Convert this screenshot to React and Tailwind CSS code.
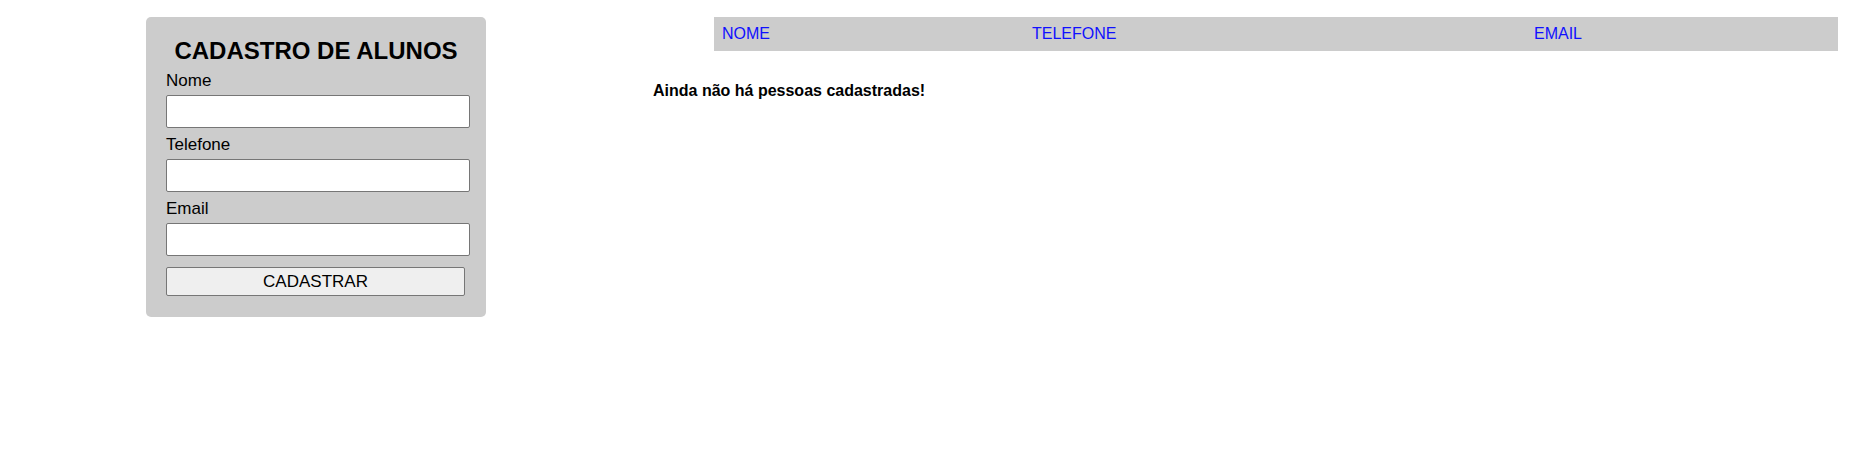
import { useState } from "react";

const Field = ({ label, value, onChange, first }) => (
  <div className={first ? "mt-[6px]" : "mt-[7px]"}>
    <label className="block text-[17px] leading-[20px] mb-[4px] text-black">
      {label}
    </label>
    <input
      type="text"
      value={value}
      onChange={e => onChange(e.target.value)}
      className="block w-[304px] h-[33px] bg-white border border-[#767676] rounded-[2px] px-1 outline-none"
    />
  </div>
);

const App = () => {
  const [nome, setNome] = useState("");
  const [telefone, setTelefone] = useState("");
  const [email, setEmail] = useState("");
  const [alunos, setAlunos] = useState([]);

  const cadastrar = () => {
    if (!nome) return;
    setAlunos([...alunos, { nome, telefone, email }]);
    setNome("");
    setTelefone("");
    setEmail("");
  };

  return (
    <div className="flex items-start pt-[17px] min-h-[475px] bg-white font-['Liberation_Sans',Arial,sans-serif]">

      {/* FORM */}
      <div className="ml-[146px] w-[340px] shrink-0 bg-[#cccccc] rounded-[5px] pt-[20px] pb-[21px] px-[20px]">
        <h2 className="text-center text-[24px] leading-[28px] font-bold text-black">
          CADASTRO DE ALUNOS
        </h2>

        <Field label="Nome" value={nome} onChange={setNome} first />
        <Field label="Telefone" value={telefone} onChange={setTelefone} />
        <Field label="Email" value={email} onChange={setEmail} />

        <button
          onClick={cadastrar}
          className="mt-[11px] block w-[299px] h-[29px] bg-[#efefef] border border-[#767676] rounded-[2px] text-[17px] leading-[20px] text-black"
        >
          CADASTRAR
        </button>
      </div>

      {/* LISTA */}
      <div className="ml-[167px] flex-1 mr-[24px]">
        <div className="ml-[61px] grid grid-cols-[310px_502px_1fr] h-[34px] bg-[#cccccc] text-[16px] leading-[34px] text-[#1010ff]">
          <span className="pl-[8px]">NOME</span>
          <span className="pl-[8px]">TELEFONE</span>
          <span className="pl-[8px]">EMAIL</span>
        </div>

        {alunos.length === 0 ? (
          <p className="mt-[30px] text-[16px] leading-[20px] font-bold text-black">
            Ainda não há pessoas cadastradas!
          </p>
        ) : (
          <div className="ml-[61px]">
            {alunos.map((a, i) => (
              <div key={i} className="grid grid-cols-[310px_502px_1fr] text-[16px] leading-[30px]">
                <span className="pl-[8px]">{a.nome}</span>
                <span className="pl-[8px]">{a.telefone}</span>
                <span className="pl-[8px]">{a.email}</span>
              </div>
            ))}
          </div>
        )}
      </div>
    </div>
  );
};

export default App;
